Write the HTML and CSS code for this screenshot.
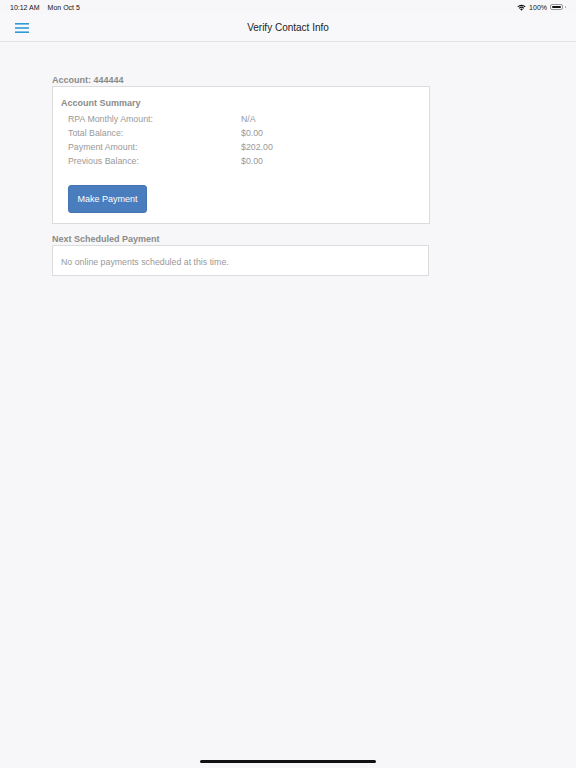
FILE: index.html
```html
<!DOCTYPE html>
<html>
<head>
<meta charset="utf-8">
<link rel="stylesheet" href="styles.css">
</head>
<body>
<div class="screen">
  <div class="status">
    <div class="status-left"><span>10:12 AM</span><span>Mon Oct 5</span></div>
    <div class="status-right">
      <svg class="wifi" width="9" height="7" viewBox="0 0 18 14"><path d="M9 13.5 L6.2 10.4 A4 4 0 0 1 11.8 10.4 Z" fill="#111"/><path d="M3.6 7.8 A7.6 7.6 0 0 1 14.4 7.8 L12.8 9.5 A5.3 5.3 0 0 0 5.2 9.5 Z" fill="#111"/><path d="M0.8 4.9 A11.7 11.7 0 0 1 17.2 4.9 L15.6 6.6 A9.4 9.4 0 0 0 2.4 6.6 Z" fill="#111"/></svg>
      <span>100%</span>
      <div class="battery"><div class="battery-fill"></div></div><div class="battery-tip"></div>
    </div>
  </div>
  <div class="navbar">
    <div class="menu">
      <svg width="14" height="10" viewBox="0 0 14 10"><rect x="0" y="0" width="14" height="1.6" fill="#2f9ad6"/><rect x="0" y="4.2" width="14" height="1.6" fill="#2f9ad6"/><rect x="0" y="8.4" width="14" height="1.6" fill="#2f9ad6"/></svg>
    </div>
    <div class="title">Verify Contact Info</div>
  </div>
  <main class="content">
    <div class="section-label">Account: 444444</div>
    <div class="panel summary">
      <div class="panel-title">Account Summary</div>
      <div class="rows">
        <div class="row"><span class="k">RPA Monthly Amount:</span><span class="v">N/A</span></div>
        <div class="row"><span class="k">Total Balance:</span><span class="v">$0.00</span></div>
        <div class="row"><span class="k">Payment Amount:</span><span class="v">$202.00</span></div>
        <div class="row"><span class="k">Previous Balance:</span><span class="v">$0.00</span></div>
      </div>
      <button class="btn">Make Payment</button>
    </div>
    <div class="section-label second">Next Scheduled Payment</div>
    <div class="panel scheduled">No online payments scheduled at this time.</div>
  </main>
  <div class="home"></div>
</div>
</body>
</html>
```
FILE: styles.css
```css
* { box-sizing: border-box; }
html, body { margin: 0; padding: 0; }
body {
  font-family: "Liberation Sans", Arial, sans-serif;
  background: #f7f7f9;
  width: 576px;
  height: 768px;
  overflow: hidden;
}
.screen {
  width: 576px;
  height: 768px;
  display: flex;
  flex-direction: column;
  position: relative;
}
.status {
  height: 14px;
  display: flex;
  justify-content: space-between;
  align-items: center;
  padding: 0 10px 0 10px;
  font-size: 7px;
  color: #111;
}
.status-left { display: flex; gap: 8px; }
.status-right { display: flex; align-items: center; gap: 2px; }
.wifi { margin-right: 1px; }
.battery {
  width: 13px;
  height: 6px;
  border: 0.8px solid #999;
  border-radius: 2px;
  padding: 0.7px;
  margin-left: 1px;
}
.battery-fill { width: 100%; height: 100%; background: #111; border-radius: 1px; }
.battery-tip { width: 1px; height: 2.5px; background: #999; border-radius: 0 1px 1px 0; }
.navbar {
  height: 28px;
  display: flex;
  align-items: center;
  justify-content: center;
  position: relative;
  border-bottom: 1px solid #e4e4e7;
  background: #f8f8fa;
}
.menu {
  position: absolute;
  left: 15px;
  top: 9px;
  line-height: 0;
}
.title {
  font-size: 10px;
  color: #222;
  letter-spacing: 0;
}
.content {
  padding: 33px 0 0 52px;
  width: 430px;
  box-sizing: content-box;
}
.section-label {
  font-size: 9px;
  font-weight: bold;
  color: #8a8a8a;
  margin-bottom: 1px;
  line-height: 10px;
}
.section-label.second { margin-top: 10px; }
.panel {
  background: #fff;
  border: 1px solid #dcdcdc;
  width: 378px;
}
.summary {
  padding: 11px 8px 10px 8px;
}
.panel-title {
  font-size: 9px;
  font-weight: bold;
  color: #8a8a8a;
  line-height: 11px;
}
.rows {
  padding-left: 7px;
  margin-top: 3px;
}
.row {
  display: flex;
  font-size: 8.8px;
  color: #999;
  line-height: 14px;
}
.row .k { width: 173px; }
.btn {
  margin: 17px 0 0 7px;
  width: 79px;
  height: 28px;
  background: #4a7dbe;
  color: #fff;
  border: 1px solid #4474b2;
  border-radius: 3px;
  font-family: "Liberation Sans", Arial, sans-serif;
  font-size: 9px;
  padding: 0;
  display: block;
}
.scheduled {
  width: 377px;
  height: 31px;
  display: flex;
  align-items: center;
  padding: 2px 8px 0 8px;
  font-size: 8.8px;
  color: #999;
}
.home {
  position: absolute;
  left: 200px;
  top: 760px;
  width: 176px;
  height: 3px;
  border-radius: 2px;
  background: #111;
}
```
